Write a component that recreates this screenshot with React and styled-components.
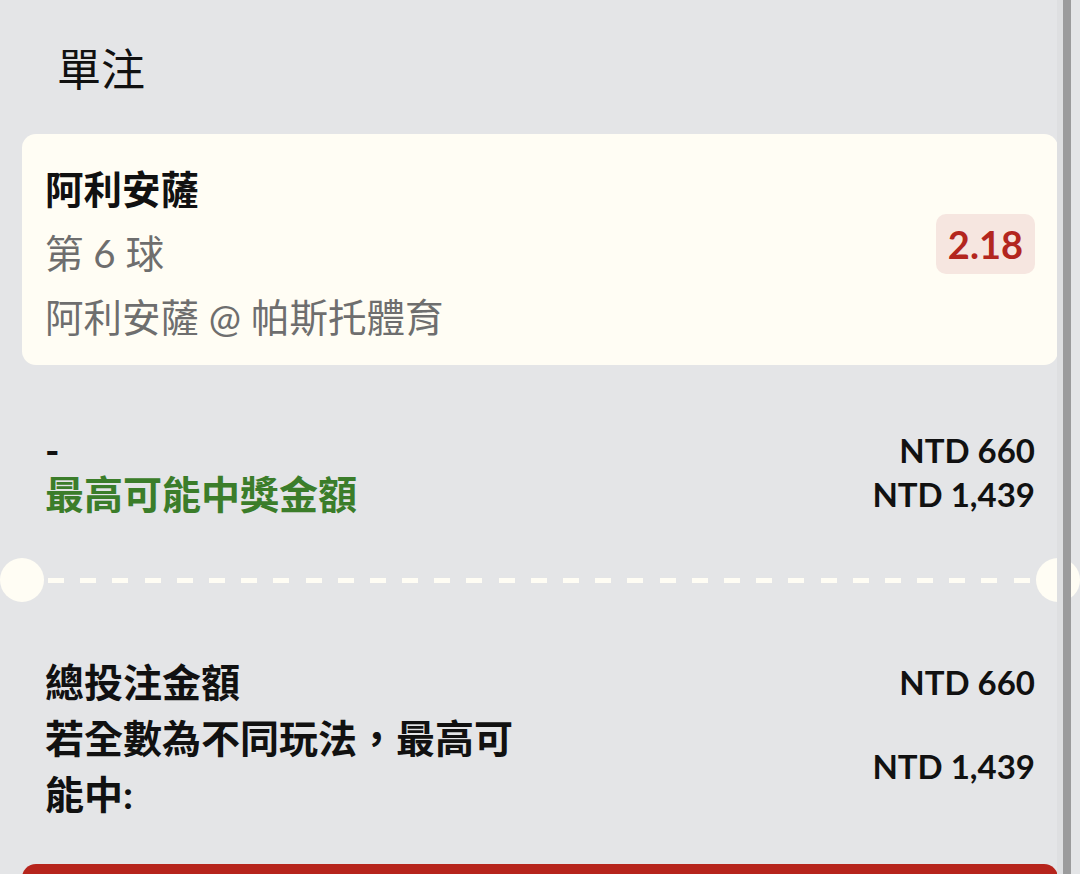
import React from "react";
import styled, { createGlobalStyle } from "styled-components";

const Global = createGlobalStyle`
  html, body { margin: 0; padding: 0; background: #e4e5e7; }
  body { font-family: Lato, "Noto Sans CJK TC", sans-serif; color: #111; }
`;

const Screen = styled.div`
  display: flex;
  height: 874px;
  overflow: hidden;
  background: #e4e5e7;
`;

const Main = styled.div`
  flex: 1;
  display: flex;
  flex-direction: column;
  padding: 0 5px 0 22px;
  min-width: 0;
  & > * {
    flex-shrink: 0;
  }
`;

const ScrollEdge = styled.div`
  width: 8px;
  flex: none;
  background: #9b9b9c;
  position: relative;
  z-index: 2;
  margin-right: 9px;
  box-shadow: -6px 0 0 #dedfe1;
`;

const Title = styled.h1`
  margin: 0;
  padding: 39px 0 35px 35px;
  font-family: Lato, "Noto Sans CJK TC", sans-serif;
  font-weight: 400;
  font-size: 44px;
  line-height: 60px;
  color: #111;
`;

const Card = styled.div`
  background: #fffdf4;
  border-radius: 14px;
  padding: 23px 23px 16px 23px;
  display: flex;
  align-items: center;
  justify-content: space-between;
`;

const CardInfo = styled.div`
  display: flex;
  flex-direction: column;
`;

const CardLine = styled.div`
  font-size: 38.5px;
  line-height: 64px;
  font-weight: ${(p) => (p.$strong ? 700 : 400)};
  color: ${(p) => (p.$strong ? "#111" : "#6e6e6e")};
  white-space: pre;
`;

const OddsBadge = styled.div`
  background: #f6e6e0;
  color: #b3261e;
  border-radius: 10px;
  font-weight: 700;
  font-size: 38px;
  line-height: 60px;
  padding: 0 12px;
  margin-bottom: 18px;
`;

const SummaryGrid = styled.div`
  display: grid;
  grid-template-columns: 1fr auto;
  align-items: center;
  padding: 0 23px 0 23px;
  margin-top: ${(p) => p.$top};
`;

const Label = styled.div`
  font-size: 39px;
  line-height: ${(p) => p.$lh};
  font-weight: 700;
  color: ${(p) => p.$color || "#111"};
  max-width: 485px;
`;

const Amount = styled.div`
  font-size: 33px;
  line-height: ${(p) => p.$lh};
  font-weight: 700;
  text-align: right;
  color: #111;
`;

const Divider = styled.div`
  position: relative;
  height: 44px;
  margin-top: 42px;
  display: flex;
  align-items: center;
  padding: 0 28px 0 26px;
`;

const Notch = styled.div`
  position: absolute;
  top: 0;
  width: 44px;
  height: 44px;
  border-radius: 50%;
  background: #fffdf4;
  ${(p) => (p.$side === "left" ? "left: -22px;" : "right: -22px;")}
`;

const Dashes = styled.div`
  flex: 1;
  height: 5px;
  display: flex;
  justify-content: space-between;
`;

const Dash = styled.span`
  width: 16px;
  height: 5px;
  background: #fffdf4;
`;

const BetButton = styled.button`
  margin-top: 42px;
  height: 96px;
  border: none;
  border-radius: 14px;
  background: #b6241c;
`;

export default function App() {
  return (
    <>
      <Global />
      <Screen>
        <Main>
          <Title>單注</Title>
          <Card>
            <CardInfo>
              <CardLine $strong>阿利安薩</CardLine>
              <CardLine>第 6 球</CardLine>
              <CardLine>阿利安薩 @ 帕斯托體育</CardLine>
            </CardInfo>
            <OddsBadge>2.18</OddsBadge>
          </Card>

          <SummaryGrid $top="63px">
            <Label $lh="44px">-</Label>
            <Amount $lh="44px">NTD 660</Amount>
            <Label $lh="44px" $color="#3b7d2a">最高可能中獎金額</Label>
            <Amount $lh="44px">NTD 1,439</Amount>
          </SummaryGrid>

          <Divider>
            <Notch $side="left" />
            <Dashes>
              {Array.from({ length: 31 }, (_, i) => (
                <Dash key={i} />
              ))}
            </Dashes>
            <Notch $side="right" />
          </Divider>

          <SummaryGrid $top="52px">
            <Label $lh="56px">總投注金額</Label>
            <Amount $lh="56px">NTD 660</Amount>
            <Label $lh="56px">若全數為不同玩法，最高可能中:</Label>
            <Amount $lh="56px">NTD 1,439</Amount>
          </SummaryGrid>

          <BetButton aria-label="投注" />
        </Main>
        <ScrollEdge />
      </Screen>
    </>
  );
}
